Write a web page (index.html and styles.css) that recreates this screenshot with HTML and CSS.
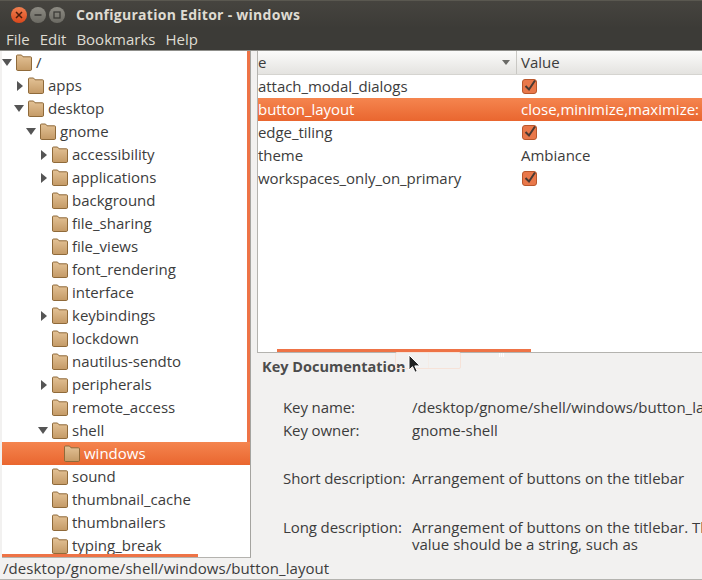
FILE: index.html
```html
<!DOCTYPE html>
<html lang="en">
<head>
<meta charset="utf-8">
<title>Configuration Editor - windows</title>
<link rel="stylesheet" href="styles.css">
</head>
<body>
<svg class="defs" width="0" height="0" aria-hidden="true">
  <defs>
    <linearGradient id="fg" x1="0" y1="0" x2="0" y2="1">
      <stop offset="0" stop-color="#e3c296"/>
      <stop offset="1" stop-color="#c49a66"/>
    </linearGradient>
    <symbol id="folder" viewBox="0 0 16 17">
      <path d="M0.500 15V2q0-1 1-1h4l1.500 1.800h7.500q1 0 1 1V15q0 1.500-1 1.500h-13q-1 0-1-1.500z" fill="url(#fg)" stroke="#8f6a3a"/>
    </symbol>
    <symbol id="check" viewBox="0 0 15 15">
      <rect x="0.500" y="0.500" width="14" height="14" rx="2.500" fill="#e9784a" stroke="#b9572c"/>
      <path d="M3.500 7l3.500 3.500 6-9" fill="none" stroke="#4a3a33" stroke-width="2"/>
    </symbol>
  </defs>
</svg>
<div class="window">
  <header class="titlebar">
    <div class="controls">
      <span class="wbtn close"><svg width="8" height="8" viewBox="0 0 8 8"><path d="M1 1l6 6M7 1L1 7" stroke="#4b1d0c" stroke-width="1.500"/></svg></span>
      <span class="wbtn"><svg width="8" height="8" viewBox="0 0 8 8"><path d="M0.500 4h7" stroke="#3c3b37" stroke-width="1.600"/></svg></span>
      <span class="wbtn"><svg width="8" height="8" viewBox="0 0 8 8"><rect x="1" y="1" width="6" height="6" fill="none" stroke="#3c3b37" stroke-width="1.300"/></svg></span>
    </div>
    <h1 class="wtitle">Configuration Editor - windows</h1>
  </header>
  <nav class="menubar">
    <span>File</span><span>Edit</span><span>Bookmarks</span><span>Help</span>
  </nav>
  <div class="main">
    <div class="tree">
      <div class="trow l0"><i class="arrow down"></i><svg class="fold"><use href="#folder"/></svg><span>/</span></div>
      <div class="trow l1"><i class="arrow side"></i><svg class="fold"><use href="#folder"/></svg><span>apps</span></div>
      <div class="trow l1"><i class="arrow down"></i><svg class="fold"><use href="#folder"/></svg><span>desktop</span></div>
      <div class="trow l2"><i class="arrow down"></i><svg class="fold"><use href="#folder"/></svg><span>gnome</span></div>
      <div class="trow l3"><i class="arrow side"></i><svg class="fold"><use href="#folder"/></svg><span>accessibility</span></div>
      <div class="trow l3"><i class="arrow side"></i><svg class="fold"><use href="#folder"/></svg><span>applications</span></div>
      <div class="trow l3"><i class="arrow"></i><svg class="fold"><use href="#folder"/></svg><span>background</span></div>
      <div class="trow l3"><i class="arrow"></i><svg class="fold"><use href="#folder"/></svg><span>file_sharing</span></div>
      <div class="trow l3"><i class="arrow"></i><svg class="fold"><use href="#folder"/></svg><span>file_views</span></div>
      <div class="trow l3"><i class="arrow"></i><svg class="fold"><use href="#folder"/></svg><span>font_rendering</span></div>
      <div class="trow l3"><i class="arrow"></i><svg class="fold"><use href="#folder"/></svg><span>interface</span></div>
      <div class="trow l3"><i class="arrow side"></i><svg class="fold"><use href="#folder"/></svg><span>keybindings</span></div>
      <div class="trow l3"><i class="arrow"></i><svg class="fold"><use href="#folder"/></svg><span>lockdown</span></div>
      <div class="trow l3"><i class="arrow"></i><svg class="fold"><use href="#folder"/></svg><span>nautilus-sendto</span></div>
      <div class="trow l3"><i class="arrow side"></i><svg class="fold"><use href="#folder"/></svg><span>peripherals</span></div>
      <div class="trow l3"><i class="arrow"></i><svg class="fold"><use href="#folder"/></svg><span>remote_access</span></div>
      <div class="trow l3"><i class="arrow down"></i><svg class="fold"><use href="#folder"/></svg><span>shell</span></div>
      <div class="trow l4 sel"><i class="arrow"></i><svg class="fold"><use href="#folder"/></svg><span>windows</span></div>
      <div class="trow l3"><i class="arrow"></i><svg class="fold"><use href="#folder"/></svg><span>sound</span></div>
      <div class="trow l3"><i class="arrow"></i><svg class="fold"><use href="#folder"/></svg><span>thumbnail_cache</span></div>
      <div class="trow l3"><i class="arrow"></i><svg class="fold"><use href="#folder"/></svg><span>thumbnailers</span></div>
      <div class="trow l3"><i class="arrow"></i><svg class="fold"><use href="#folder"/></svg><span>typing_break</span></div>
      <div class="vscroll"></div>
      <div class="hscroll"></div>
    </div>
    <div class="pane">
      <div class="keys">
        <div class="khead">
          <div class="kname">e<i class="sort"></i></div>
          <div class="kval ktext">Value</div>
        </div>
        <div class="krow"><div class="kname">attach_modal_dialogs</div><div class="kval"><svg class="chk"><use href="#check"/></svg></div></div>
        <div class="krow sel"><div class="kname">button_layout</div><div class="kval ktext">close,minimize,maximize:</div></div>
        <div class="krow"><div class="kname">edge_tiling</div><div class="kval"><svg class="chk"><use href="#check"/></svg></div></div>
        <div class="krow"><div class="kname">theme</div><div class="kval ktext">Ambiance</div></div>
        <div class="krow"><div class="kname">workspaces_only_on_primary</div><div class="kval"><svg class="chk"><use href="#check"/></svg></div></div>
        <div class="kscroll"></div>
      </div>
      <section class="doc">
        <h2>Key Documentation</h2>
        <div class="dl first"><span class="dt">Key name:</span><span class="dd">/desktop/gnome/shell/windows/button_layout</span></div>
        <div class="dl"><span class="dt">Key owner:</span><span class="dd">gnome-shell</span></div>
        <div class="dl gap"><span class="dt">Short description:</span><span class="dd">Arrangement of buttons on the titlebar</span></div>
        <div class="dl gap long"><span class="dt">Long description:</span><span class="dd">Arrangement of buttons on the titlebar. The<br>value should be a string, such as</span></div>
      </section>
    </div>
  </div>
  <footer class="status">/desktop/gnome/shell/windows/button_layout</footer>
  <div class="ghost"><i class="ghost-div"></i></div>
  <div class="grip"></div>
  <svg class="cursor" width="14" height="20" viewBox="0 0 14 20"><path d="M1 1v15l3.500-3.300 2.500 5.600 2.300-1-2.500-5.400H12z" fill="#222" stroke="#fff"/></svg>
</div>
</body>
</html>
```
FILE: styles.css
```css
* { box-sizing: border-box; }
html, body { margin: 0; padding: 0; }
body { width: 702px; height: 580px; overflow: hidden; background: #f2f1f0; font-family: "Open Sans", "Noto Sans", sans-serif; font-size: 15px; color: #3c3c3c; }
.defs { position: absolute; }
.window { position: relative; width: 702px; height: 580px; display: flex; flex-direction: column; overflow: hidden; }
.titlebar { height: 28px; flex: none; display: flex; align-items: center; padding-left: 11px; background: linear-gradient(#46443f, #3c3b37); border-top: 1px solid #5a5850; }
.controls { display: flex; gap: 3px; }
.wbtn { width: 16px; height: 16px; border-radius: 50%; display: flex; align-items: center; justify-content: center; background: linear-gradient(#8d8b83, #6b6a63); }
.wbtn.close { background: linear-gradient(#f08050, #d9481c); }
.wtitle { margin: 0 0 0 11px; font-size: 14px; font-weight: 700; color: #dfdbd2; letter-spacing: 0.27px; }
.menubar { height: 22px; flex: none; display: flex; gap: 10px; padding: 0 6px 1px; align-items: center; background: #3c3b37; color: #dfdbd2; font-size: 15px; }
.main { flex: 1; min-height: 0; display: flex; border-top: 1px solid #8f8f8b; }
.tree { position: relative; width: 249px; height: 507px; margin-left: 2px; flex: none; background: #fff; border-right: 1px solid #a5a4a0; border-bottom: 1px solid #b4b3af; overflow: hidden; }
.trow { height: 23px; display: flex; align-items: center; white-space: nowrap; }
.trow span { padding-bottom: 2px; }
.l0 { padding-left: 0; }
.l1 { padding-left: 12px; }
.l2 { padding-left: 24px; }
.l3 { padding-left: 36px; }
.l4 { padding-left: 48px; }
.trow.sel { background: linear-gradient(#f5854f, #e9662f); color: #fff; position: relative; z-index: 1; }
.arrow { width: 14px; height: 10px; flex: none; position: relative; }
.arrow.down::after { content: ""; position: absolute; left: 0; top: 1px; border-left: 5px solid transparent; border-right: 5px solid transparent; border-top: 7px solid #555; }
.arrow.side::after { content: ""; position: absolute; left: 3px; top: 0; border-top: 5px solid transparent; border-bottom: 5px solid transparent; border-left: 6px solid #555; }
.fold { width: 16px; height: 17px; flex: none; margin-right: 4px; }
.vscroll { position: absolute; right: 0; top: 0; width: 3px; height: 392px; background: #ee7346; }
.hscroll { position: absolute; left: 0; bottom: 0; width: 196px; height: 3px; background: #ee7346; }
.pane { flex: 1; min-width: 0; display: flex; flex-direction: column; padding-left: 6px; }
.keys { position: relative; height: 302px; flex: none; background: #fff; border: 1px solid #b4b3af; border-top: 0; border-right: 0; overflow: hidden; }
.khead, .krow { display: flex; height: 23px; white-space: nowrap; align-items: center; }
.khead { height: 24px; background: linear-gradient(#fbfbfa, #e4e3e0); border-bottom: 1px solid #d5d4d0; }
.kname { width: 259px; flex: none; position: relative; overflow: hidden; padding-bottom: 2px; letter-spacing: -0.05px; }
.khead .kname { height: 100%; display: flex; align-items: center; border-right: 1px solid #c9c8c4; }
.sort { position: absolute; right: 6px; top: 9px; border-left: 4px solid transparent; border-right: 4px solid transparent; border-top: 5px solid #6a6a66; }
.kval { padding-left: 4px; overflow: hidden; }
.kval.ktext { padding-bottom: 2px; }
.krow.sel { background: linear-gradient(#f5854f, #e9662f); color: #fff; }
.chk { display: block; width: 15px; height: 15px; margin-left: 1px; }
.kscroll { position: absolute; left: 19px; bottom: 0; width: 254px; height: 3px; background: #ee7346; }
.doc { flex: 1; padding: 5px 0 0 5px; overflow: hidden; white-space: nowrap; }
.doc h2 { margin: 0; font-size: 14.5px; font-weight: 700; line-height: 18px; color: #4c4c4c; }
.dl { display: flex; line-height: 17px; margin-top: 6px; padding-left: 21px; }
.dl.first { margin-top: 23px; }
.dl.gap { margin-top: 31px; }
.dl.gap.long { margin-top: 32px; }
.dt { width: 129px; flex: none; letter-spacing: -0.1px; }
.status { height: 22px; position: absolute; left: 0; right: 0; bottom: 0; padding-left: 3px; line-height: 21px; letter-spacing: 0.07px; background: #f2f1f0; border-bottom: 1px solid #b4b3af; white-space: nowrap; }
.ghost { position: absolute; left: 395px; top: 352px; width: 66px; height: 17px; border: 1px solid #f6e2d8; border-radius: 2px; }
.ghost-div { position: absolute; left: 32px; top: 0; bottom: 0; width: 1px; background: #f4ece6; }
.grip { position: absolute; left: 499px; top: 353px; width: 5px; height: 4px; background: repeating-linear-gradient(90deg, #fff 0 1px, transparent 1px 2px); }
.cursor { position: absolute; left: 408px; top: 354px; }
```
